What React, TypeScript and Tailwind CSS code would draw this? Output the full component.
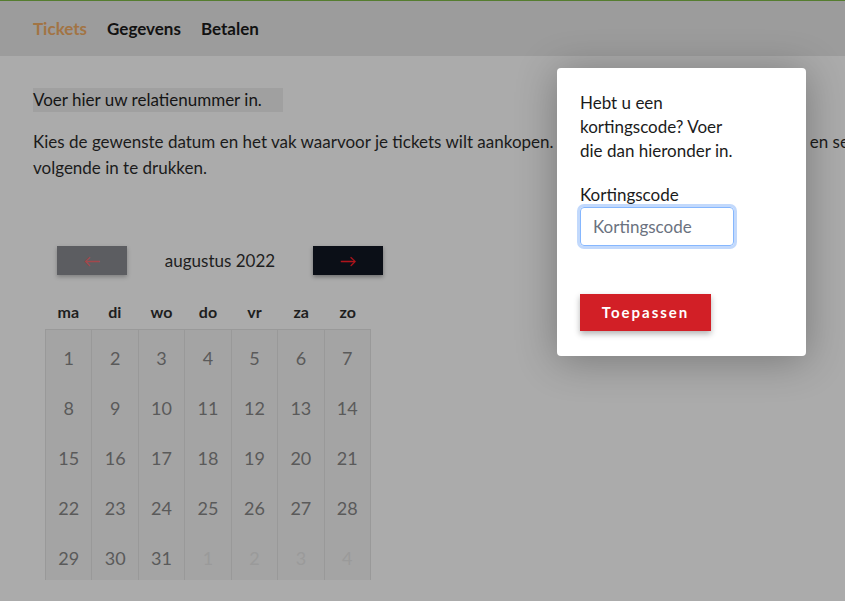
const days = ["ma", "di", "wo", "do", "vr", "za", "zo"];

// 5 weeks of augustus 2022, trailing days belong to september
const cells: { day: number; muted: boolean }[] = [
  ...Array.from({ length: 31 }, (_, i) => ({ day: i + 1, muted: false })),
  ...[1, 2, 3, 4].map((d) => ({ day: d, muted: true })),
];

function Header() {
  return (
    <header className="h-[55px] bg-[#9c9c9c] flex items-center gap-[20px] px-[33px] text-[17px] font-bold">
      <span className="text-[#a27444]">Tickets</span>
      <span className="text-[#121212]">Gegevens</span>
      <span className="text-[#121212]">Betalen</span>
    </header>
  );
}

function Calendar() {
  return (
    <div className="ml-[12px] mt-[65px]">
      <div className="flex items-center justify-between w-[350px] px-[12px]">
        <button className="w-[70px] h-[29px] bg-[#5c5d61] text-[#a3474b] text-[17px] leading-none shadow-[0_2px_4px_rgba(0,0,0,0.25)]">
          ←
        </button>
        <span className="text-[17px] text-[#1e1e1e]">augustus 2022</span>
        <button className="w-[70px] h-[29px] bg-[#0b0f17] text-[#b0141b] text-[17px] leading-none shadow-[0_2px_4px_rgba(0,0,0,0.35)]">
          →
        </button>
      </div>
      <div className="grid grid-cols-7 w-[326px] mt-[22px] h-[32px] items-center text-center text-[16px] font-bold text-[#1e1e1e]">
        {days.map((d) => (
          <span key={d} className="pb-[3px]">{d}</span>
        ))}
      </div>
      <div className="grid grid-cols-7 w-[326px] border-l border-t border-[#999999] bg-[#a4a4a4]">
        {cells.map((c, i) => (
          <div
            key={i}
            className={
              "h-[50px] border-r border-[#999999] flex items-center justify-center pt-[6px] text-[18px] " +
              (c.muted ? "text-[#9a9a9a]" : "text-[#5a5a5a]")
            }
          >
            {c.day}
          </div>
        ))}
      </div>
    </div>
  );
}

function DiscountModal() {
  return (
    <div className="absolute left-[557px] top-[68px] w-[249px] h-[288px] bg-white rounded-[4px] px-[23px] pt-[23px] shadow-[0_4px_40px_rgba(0,0,0,0.3)] text-[#1b1b1b]">
      <p className="max-w-[155px] text-[17px] leading-[24px]">
        Hebt u een kortingscode? Voer die dan hieronder in.
      </p>
      <label className="block mt-[20px] text-[17px] leading-[24px]">Kortingscode</label>
      <input
        placeholder="Kortingscode"
        className="block w-[154px] h-[39px] px-[12px] rounded-[4px] border border-[#86b7fe] ring-[3px] ring-[#c2d9fc] outline-none text-[17px] placeholder:text-[#6b7280]"
      />
      <button className="mt-[48px] w-[131px] h-[37px] bg-[#d21f26] text-white text-[15px] font-bold tracking-[2px] shadow-[0_3px_6px_rgba(0,0,0,0.3)]">
        Toepassen
      </button>
    </div>
  );
}

export default function App() {
  return (
    <div
      className="relative w-[845px] h-[601px] overflow-hidden bg-[#ababab]"
      style={{ fontFamily: "Lato, 'Open Sans', sans-serif" }}
    >
      <div className="h-px bg-[#557d2f]" />
      <Header />
      <main className="px-[33px] pt-[32px]">
        <div className="w-[250px] h-[24px] bg-[#a0a0a0] text-[17px] leading-[24px] text-[#151515]">
          Voer hier uw relatienummer in.
        </div>
        <p className="mt-[17px] text-[17px] leading-[26px] text-[#1b1b1b] whitespace-nowrap">
          Kies de gewenste datum en het vak waarvoor je tickets wilt aankopen. Kies vervolgens het aantal tickets en selecteer je plaatsen door op
          <br />
          volgende in te drukken.
        </p>
        <Calendar />
      </main>
      <DiscountModal />
    </div>
  );
}
